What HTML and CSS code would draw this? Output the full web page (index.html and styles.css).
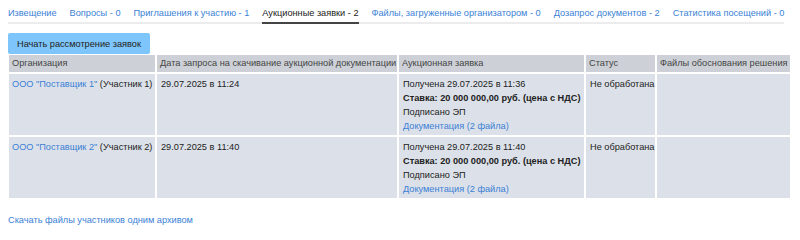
FILE: index.html
```html
<!DOCTYPE html>
<html lang="ru">
<head>
  <meta charset="UTF-8" />
  <title>Аукционные заявки</title>
  <link rel="stylesheet" href="styles.css">
</head>
<body>
  <div class="page">
    <div class="tabs">
      <a class="tab" href="#">Извещение</a>
      <a class="tab" href="#">Вопросы - 0</a>
      <a class="tab" href="#">Приглашения к участию - 1</a>
      <a class="tab active" href="#">Аукционные заявки - 2</a>
      <a class="tab" href="#">Файлы, загруженные организатором - 0</a>
      <a class="tab" href="#">Дозапрос документов - 2</a>
      <a class="tab" href="#">Статистика посещений - 0</a>
    </div>

    <button class="start-btn">Начать рассмотрение заявок</button>

    <table class="bids">
      <colgroup>
        <col class="c-org">
        <col class="c-date">
        <col class="c-bid">
        <col class="c-status">
        <col class="c-files">
      </colgroup>
      <thead>
        <tr>
          <th>Организация</th>
          <th>Дата запроса на скачивание аукционной документации</th>
          <th>Аукционная заявка</th>
          <th>Статус</th>
          <th>Файлы обоснования решения</th>
        </tr>
      </thead>
      <tbody>
        <tr>
          <td><a href="#">ООО "Поставщик 1"</a> (Участник 1)</td>
          <td>29.07.2025 в 11:24</td>
          <td>
            <div>Получена 29.07.2025 в 11:36</div>
            <div class="rate">Ставка: 20 000 000,00 руб. (цена с НДС)</div>
            <div>Подписано ЭП</div>
            <a class="docs" href="#">Документация (2 файла)</a>
          </td>
          <td>Не обработана</td>
          <td></td>
        </tr>
        <tr>
          <td><a href="#">ООО "Поставщик 2"</a> (Участник 2)</td>
          <td>29.07.2025 в 11:40</td>
          <td>
            <div>Получена 29.07.2025 в 11:40</div>
            <div class="rate">Ставка: 20 000 000,00 руб. (цена с НДС)</div>
            <div>Подписано ЭП</div>
            <a class="docs" href="#">Документация (2 файла)</a>
          </td>
          <td>Не обработана</td>
          <td></td>
        </tr>
      </tbody>
    </table>

    <a class="archive" href="#">Скачать файлы участников одним архивом</a>
  </div>
</body>
</html>
```

FILE: styles.css
```css
/* Auction bids page */
body {
  margin: 0;
  font-family: "Liberation Sans", Arial, sans-serif;
  font-size: 9.2px;
  line-height: 14px;
  color: #222;
  background-color: #fff;
}
a {
  color: #3a7fd5;
  text-decoration: none;
}
.page {
  padding: 0 8px;
}
.tabs {
  display: inline-flex;
  gap: 13px;
  padding-top: 6px;
  border-bottom: 2px solid #ececec;
}
.tab {
  padding-bottom: 2px;
  white-space: nowrap;
}
.tab.active {
  color: #222;
  border-bottom: 2px solid #444;
  margin-bottom: -2px;
}
.start-btn {
  display: block;
  margin-top: 9px;
  height: 21px;
  padding: 0 9px;
  font: inherit;
  color: #222;
  background-color: #7dc5fa;
  border: none;
  border-radius: 2px;
  cursor: pointer;
}
.bids {
  width: 785px;
  table-layout: fixed;
  border-collapse: separate;
  border-spacing: 2px;
  margin: -1px 0 0 -1px;
}
.c-org { width: 146px; }
.c-date { width: 240px; }
.c-bid { width: 185px; }
.c-status { width: 69px; }
.c-files { width: 133px; }
.bids th,
.bids td {
  white-space: nowrap;
  overflow: hidden;
}
.bids th {
  text-align: left;
  font-weight: normal;
  color: #444;
  background-color: #cdd1d7;
  padding: 2px 2px 2px 3px;
  line-height: 13px;
}
.bids td {
  vertical-align: top;
  background-color: #dce1e9;
  padding: 3px 2px 2px 4px;
}
.bids td:first-child {
  padding-left: 3px;
}
.rate {
  font-weight: bold;
}
.docs {
  display: block;
}
.archive {
  display: inline-block;
  margin-top: 13px;
}
```
